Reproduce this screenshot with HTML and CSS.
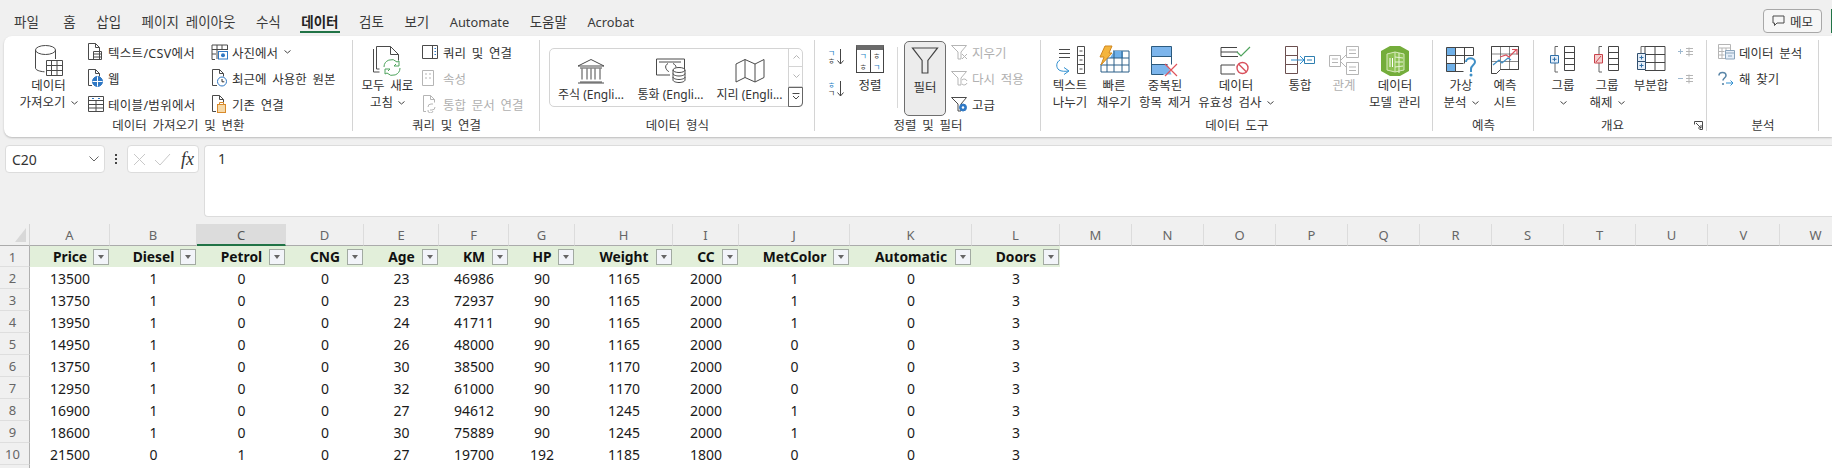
FILE: index.html
```html
<!DOCTYPE html>
<html lang="ko">
<head>
<meta charset="utf-8">
<title>데이터</title>
<link rel="stylesheet" href="styles.css">
</head>
<body>
<div class="app">
  <div class="tabs">
    <span class="tab first">파일</span><span class="tab">홈</span><span class="tab">삽입</span><span class="tab">페이지 레이아웃</span><span class="tab">수식</span><span class="tab active">데이터</span><span class="tab">검토</span><span class="tab">보기</span><span class="tab lat">Automate</span><span class="tab">도움말</span><span class="tab lat">Acrobat</span>
    <button class="memo"><svg width="13" height="12" viewBox="0 0 13 12" class="ln"><path d="M1 1h11v7H5L2.500 10.500V8H1z"/></svg>메모</button>
    <span class="share"></span>
  </div>

  <div class="ribbon">
    <section class="group g1">
      <div class="body">
        <div class="big w77">
          <svg class="ico ln" width="28" height="32" viewBox="0 0 28 32"><ellipse cx="10.500" cy="5" rx="10" ry="4.500"/><path d="M.5 5v18c0 2 4 3.500 9 3.800M20.500 5v9"/><path d="M11.500 15.500h16v15h-16zM11.500 20.500h16M11.500 25.500h16M16.500 15.500v15M22 15.500v15"/></svg>
          <span>데이터</span><span>가져오기<svg class="chev" width="7" height="4" viewBox="0 0 7 4"><path d="M.5.5l3 2.500 3-2.500"/></svg></span>
        </div>
        <div class="rows c124">
          <div class="small wide"><span class="sic"><svg class="ln" width="16" height="18" viewBox="0 0 16 18"><path d="M1.500.5h7l4 4v12h-11z"/><path d="M8.500.5v4h4M6.500 8.500h8v8h-8zM6.500 11h8M6.500 14h8"/></svg></span>텍스트/CSV에서</div>
          <div class="small"><span class="sic"><svg class="ln" width="16" height="18" viewBox="0 0 16 18"><path d="M5 16.500H1.500V.5h7l4 4v3"/><path d="M8.500.5v4h4"/><circle cx="10.500" cy="12.500" r="5" fill="#2f78c4" stroke="#2f78c4"/><path d="M5.500 12.500h10M10.500 7.500v10" stroke="#fff"/></svg></span>웹</div>
          <div class="small wide"><span class="sic"><svg class="ln" width="18" height="18" viewBox="0 0 18 18"><path d="M1.500 1.500h15v15h-15zM1.500 5.500h15M1.500 9.500h15M1.500 13h15M9 5.500v11"/><path d="M5 3.500h2M11 3.500h2" stroke="#2f78c4"/></svg></span>테이블/범위에서</div>
        </div>
        <div class="rows">
          <div class="small"><span class="sic"><svg class="ln" width="18" height="16" viewBox="0 0 18 16"><path d="M4 15.500H1V1h15.500v5M1 5.500h15.500M1 10h4M6 1v14M11 1v4.500"/><rect x="7.500" y="7.500" width="9" height="7.500" stroke="#2f78c4"/><circle cx="12" cy="11.200" r="2" fill="#2f78c4" stroke="none"/></svg></span>사진에서<svg class="chev" width="7" height="4" viewBox="0 0 7 4"><path d="M.5.5l3 2.500 3-2.500"/></svg></div>
          <div class="small"><span class="sic"><svg class="ln" width="17" height="18" viewBox="0 0 17 18"><path d="M6 16.500H1.500V.5h7l4 4v3"/><path d="M8.500.5v4h4"/><circle cx="11" cy="12.500" r="4.500" stroke="#2f78c4"/><path d="M11 10v2.800h2.300" stroke="#333"/></svg></span>최근에 사용한 원본</div>
          <div class="small"><span class="sic"><svg class="ln" width="17" height="18" viewBox="0 0 17 18"><path d="M5 16.500H1.500V.5h7l4 4v3"/><path d="M8.500.5v4h4"/><rect x="6.500" y="9.500" width="8" height="8" stroke="#d98a2b" fill="#f6d9a8"/><path d="M8.500 9.500V7.500h4v2" stroke="#d98a2b"/></svg></span>기존 연결</div>
        </div>
      </div>
      <div class="label">데이터 가져오기 및 변환</div>
    </section>

    <section class="group g2">
      <div class="body">
        <div class="big w70">
          <svg class="ico ln" width="30" height="32" viewBox="0 0 30 32"><path d="M.5 27V4M.5 27h6"/><path d="M3.500 24V1.500h14l8 8v6M3.500 24h3"/><path d="M17.500 1.500v8h8"/><path d="M11 22a7.500 7.500 0 0 1 13-5l2-1v5h-5l2-2M27 23a7.500 7.500 0 0 1-13 5l-2 1v-5h5l-2 2" stroke="#4ea35c"/></svg>
          <span>모두 새로</span><span>고침<svg class="chev" width="7" height="4" viewBox="0 0 7 4"><path d="M.5.5l3 2.500 3-2.500"/></svg></span>
        </div>
        <div class="rows">
          <div class="small"><span class="sic"><svg class="ln" width="16" height="14" viewBox="0 0 16 14"><path d="M.5.5h15v13H.5z"/><path d="M10.500.5v13"/><path d="M12.500 3.500h1.500M12.500 6.500h1.500M12.500 9.500h1.500" stroke="#2f78c4"/></svg></span>쿼리 및 연결</div>
          <div class="small off"><span class="sic"><svg class="lo" width="12" height="16" viewBox="0 0 12 16"><path d="M.5.5h11v15H.5zM3 4h2M7 4h2M3 8h2M7 8h2"/></svg></span>속성</div>
          <div class="small off"><span class="sic"><svg class="lo" width="16" height="18" viewBox="0 0 16 18"><path d="M4 16.500H1.500V.5h7l4 4v3M8.500.5v4h4"/><path d="M6 12a3 3 0 0 1 3-3h2M13 12a3 3 0 0 1-3 3H8M6 15a2.500 2.500 0 0 0 5 1"/></svg></span>통합 문서 연결</div>
        </div>
      </div>
      <div class="label">쿼리 및 연결</div>
    </section>

    <section class="group g3">
      <div class="body">
        <div class="gallery">
          <div class="gitem w78">
            <svg class="ln" width="28" height="26" viewBox="0 0 28 26"><path d="M1 8.500L14 2l13 6.500zM3 24.500h22M1 25.500h26M5 11v11M10 11v11M14 11v11M18 11v11M23 11v11M3 10.500h22"/></svg>
            <span>주식 (Engli...</span>
          </div>
          <div class="gitem w81">
            <svg class="ln" width="30" height="26" viewBox="0 0 30 26"><path d="M14 17.500H.5V1.500h28v10M3 4.500h22"/><path d="M12 6c-2 1-3 3-2 5s2 3 3 3M17 6c2 1 3 2 3 4"/><ellipse cx="23" cy="12.500" rx="6" ry="2.500"/><path d="M17 12.500v10c0 1.500 3 2.500 6 2.500s6-1 6-2.500v-10M17 16c0 1.500 3 2.500 6 2.500s6-1 6-2.500M17 19.500c0 1.500 3 2.500 6 2.500s6-1 6-2.500"/></svg>
            <span>통화 (Engli...</span>
          </div>
          <div class="gitem w77">
            <svg class="ln" width="30" height="26" viewBox="0 0 30 26"><path d="M1 6.500L10 2l10 4.500L29 2v18l-9 4.500L10 20l-9 4.500zM10 2v18M20 6.500v18"/></svg>
            <span>지리 (Engli...</span>
          </div>
          <div class="gscroll">
            <span class="gs"><svg class="lo" width="7" height="4" viewBox="0 0 7 4"><path d="M.5 3.500l3-3 3 3"/></svg></span>
            <span class="gs"><svg class="lo" width="7" height="4" viewBox="0 0 7 4"><path d="M.5.5l3 3 3-3"/></svg></span>
            <span class="gs more"><svg class="ln" width="8" height="7" viewBox="0 0 8 7"><path d="M.5.5h7M1 3l3 3 3-3"/></svg></span>
          </div>
        </div>
      </div>
      <div class="label">데이터 형식</div>
    </section>

    <section class="group g4">
      <div class="body">
        <div class="sortcol">
          <div class="sorti"><span class="jcol"><span class="jb">ㄱ</span><span class="jd">ㅎ</span></span><svg width="7" height="16" viewBox="0 0 7 16"><path d="M3.500 0v15M.5 11.500l3 3.500 3-3.500" fill="none" stroke="#444"/></svg></div>
          <div class="sorti"><span class="jcol"><span class="jb">ㅎ</span><span class="jd">ㄱ</span></span><svg width="7" height="16" viewBox="0 0 7 16"><path d="M3.500 0v15M.5 11.500l3 3.500 3-3.500" fill="none" stroke="#444"/></svg></div>
        </div>
        <div class="big w40">
          <div class="bsort">
            <span class="bcol"><span class="jb">ㄱ</span><span class="jd">ㅎ</span></span>
            <span class="bcol"><span class="jd">ㅎ</span><span class="jb">ㄱ</span></span>
          </div>
          <span>정렬</span>
        </div>
        <span class="vsep"></span>
        <div class="big filter">
          <svg class="ico" width="28" height="28" viewBox="0 0 28 28"><path d="M1 1h26L17 14v13h-6V14z" fill="none" stroke="#444" stroke-width="1.200"/></svg>
          <span>필터</span>
        </div>
        <div class="rows c-filter">
          <div class="small off"><span class="sic"><svg class="lo" width="17" height="15" viewBox="0 0 17 15"><path d="M.5.5h15L10 7v7H7V7z"/><path d="M11 9l5 5M16 9l-5 5"/></svg></span>지우기</div>
          <div class="small off"><span class="sic"><svg class="lo" width="17" height="15" viewBox="0 0 17 15"><path d="M.5.5h15L10 7v7H7V7z"/><path d="M11 9a3 3 0 0 1 5 1M16 12a3 3 0 0 1-5 1"/></svg></span>다시 적용</div>
          <div class="small"><span class="sic"><svg class="ln" width="17" height="15" viewBox="0 0 17 15"><path d="M.5.5h15L10 7v7H7V7z"/><circle cx="12" cy="10.500" r="3.500" fill="#2f78c4" stroke="#2f78c4"/><circle cx="12" cy="10.500" r="1.200" fill="#fff" stroke="none"/></svg></span>고급</div>
        </div>
      </div>
      <div class="label">정렬 및 필터</div>
    </section>

    <section class="group g5">
      <div class="body">
        <div class="big w44">
          <svg class="ico ln" width="32" height="32" viewBox="0 0 32 32"><path d="M5 4.500h11M5 8.500h11M5 12.500h11"/><path d="M23.500 1.500h7v27h-7zM23.500 10.500h7M23.500 19.500h7M25.500 6h3M25.500 15h3M25.500 24h3"/><path d="M6 15a6 6 0 0 0-1 10c2 1.500 7 1.500 9 1M10 22.500l5 3.500-5 3.500" stroke="#2f8fd0"/></svg>
          <span>텍스트</span><span>나누기</span>
        </div>
        <div class="big w44">
          <svg class="ico" width="32" height="32" viewBox="0 0 32 32"><path d="M15 6h16v21H3v-8" fill="none" stroke="#2b5f88"/><path d="M16 6h9v7H12z" fill="#6fb0e8"/><path d="M9 13h22M3 20h28M16 6v21M24 6v21M9 13v14" fill="none" stroke="#2b5f88"/><path d="M7 1h7l-3 7h3L3 20l3-8H2z" fill="#f4b53d" stroke="#d1871e"/></svg>
          <span>빠른</span><span>채우기</span>
        </div>
        <div class="big w58">
          <svg class="ico" width="28" height="32" viewBox="0 0 28 32"><path d="M.5 1.500h20v10H.5z" fill="#7cb5ec"/><path d="M.5 11.500h20v8H.5z" fill="#fff"/><path d="M.5 19.500h16l4 10H.5z" fill="#7cb5ec"/><path d="M.5 1.500h20M.5 1.500v28M20.500 1.500v18M.5 11.500h20M.5 19.500h16M.5 29.500h12" fill="none" stroke="#2c5b7f"/><path d="M14 19l12 12M26 19L14 31" fill="none" stroke="#e0545c" stroke-width="1.200"/></svg>
          <span>중복된</span><span>항목 제거</span>
        </div>
        <div class="big w84">
          <svg class="ico" width="32" height="32" viewBox="0 0 32 32"><path d="M17 2.500H1v9h17M1 7h17M1 20v9h14" fill="none" stroke="#444"/><path d="M17 7l4 4 9-9" fill="none" stroke="#4ea35c" stroke-width="1.200"/><path d="M1 20h14" fill="none" stroke="#444"/><circle cx="22.500" cy="23" r="5.500" fill="none" stroke="#d8505c" stroke-width="1.400"/><path d="M18.500 19l8 8" stroke="#d8505c" stroke-width="1.400"/></svg>
          <span>데이터</span><span>유효성 검사<svg class="chev" width="7" height="4" viewBox="0 0 7 4"><path d="M.5.5l3 2.500 3-2.500"/></svg></span>
        </div>
        <div class="big w44">
          <svg class="ico ln" width="30" height="32" viewBox="0 0 30 32"><path d="M.5 1.500h12v9h-12zM.5 10.500h12v9h-12zM.5 19.500h12v9h-12z" stroke="#6b4f4f"/><path d="M6 15h13M15 11l4 4-4 4" stroke="#2f8fd0"/><path d="M19.500 11.500h10v7h-10zM22 15h5" stroke="#2f7fb0"/></svg>
          <span>통합</span>
        </div>
        <div class="big w44 off">
          <svg class="ico lo" width="30" height="32" viewBox="0 0 30 32"><path d="M17.500 1.500h12v11h-12zM17.500 17.500h12v12h-12zM.5 10.500h11v11H.5zM20 5h7M20 8.500h7M20 22h7M20 25.500h7M3 14h6M3 17.500h6M12 15l5-5M12 17l5 5"/></svg>
          <span>관계</span>
        </div>
        <div class="big w58">
          <svg class="ico" width="30" height="32" viewBox="0 0 30 32"><path d="M1 6l9-5h10l9 5v20l-9 5H10l-9-5z" fill="#74ad3b"/><path d="M7 9l8-2v20l-8-2zM15 7l9 2v16l-9 2" fill="#8cc152" stroke="#d8eabc"/><path d="M15 12l8 1M15 17h8M15 22l8-1M19 8v20" stroke="#e6f2d4"/><path d="M10 13v9M12.500 13v9" stroke="#fff"/></svg>
          <span>데이터</span><span>모델 관리</span>
        </div>
      </div>
      <div class="label">데이터 도구</div>
    </section>

    <section class="group g6">
      <div class="body">
        <div class="big w50">
          <svg class="ico" width="31" height="32" viewBox="0 0 31 32"><path d="M.5 2.500h9v8h-9zM.5 18.500h9v8h-9z" fill="#6fb0e8"/><path d="M.5 2.500h27v8M.5 2.500v24h17M.5 10.500h27M.5 18.500h17M9.500 2.500v24M18.500 2.500v16" fill="none" stroke="#444"/><path d="M20 17c0-5 9-5 9 0 0 3-4 3-4 7v3" fill="none" stroke="#3f8fc6" stroke-width="2"/><circle cx="25" cy="30" r="1.500" fill="#3f8fc6"/></svg>
          <span>가상</span><span>분석<svg class="chev" width="7" height="4" viewBox="0 0 7 4"><path d="M.5.5l3 2.500 3-2.500"/></svg></span>
        </div>
        <div class="big w38">
          <svg class="ico" width="29" height="32" viewBox="0 0 29 32"><path d="M.5 1.500h27v23h-18l-4 4h-5zM.5 9h27M.5 16.500h27M9.500 1.500v23M18.500 1.500v23" fill="none" stroke="#555" stroke-width=".7"/><path d="M.5 1.500h27M27.500 1.500v23H9.500l-4 4h-5V1.500" fill="none" stroke="#444"/><path d="M2 20l6-5 3 3 6-5 3 2" fill="none" stroke="#3f8fc6" stroke-width="1.200"/><path d="M9 12l6-2 3 2 7-7M21 4.500h5v5" fill="none" stroke="#d8505c" stroke-width="1.200"/></svg>
          <span>예측</span><span>시트</span>
        </div>
      </div>
      <div class="label">예측</div>
    </section>

    <section class="group g7">
      <div class="body">
        <div class="big w44">
          <svg class="ico" width="26" height="32" viewBox="0 0 26 32"><path d="M8 1.500H5v9M5 18v9h3" fill="none" stroke="#666"/><path d="M.5 10.500h8v7.500h-8z" fill="#e5eef8" stroke="#2f6fa8"/><path d="M2.500 14.300h4M4.500 12.300v4" stroke="#2f6fa8"/><path d="M14.500 1.500h10v24h-10zM14.500 7.500h10M14.500 13.500h10M14.500 19.500h10" fill="none" stroke="#444"/></svg>
          <span>그룹</span><span><svg class="chev only" width="7" height="4" viewBox="0 0 7 4"><path d="M.5.5l3 2.500 3-2.500"/></svg></span>
        </div>
        <div class="big w44">
          <svg class="ico" width="26" height="32" viewBox="0 0 26 32"><path d="M8 1.500H5v8M5 18v9h3" fill="none" stroke="#666"/><path d="M.5 9.500h8v8.500h-8z" fill="#f6cfcf" stroke="#c8424a"/><path d="M2 17l5-6" stroke="#c8424a"/><path d="M14.500 1.500h10v24h-10zM14.500 7.500h10M14.500 13.500h10M14.500 19.500h10" fill="none" stroke="#444"/></svg>
          <span>그룹</span><span>해제<svg class="chev" width="7" height="4" viewBox="0 0 7 4"><path d="M.5.5l3 2.500 3-2.500"/></svg></span>
        </div>
        <div class="big w44">
          <svg class="ico" width="30" height="32" viewBox="0 0 30 32"><path d="M9 1.500h20v24H9M9 1.500v7M19 1.500v24M9 9.500h20M9 17.500h20" fill="none" stroke="#444"/><path d="M1.500 8.500h8v8h-8zM1.500 16.500h8v8h-8z" fill="#e5eef8" stroke="#2f4f6f"/><path d="M3.500 12.500h4M5.500 10.500v4M3.500 20.500h4M5.500 18.500v4" stroke="#2f6fa8"/><path d="M5 1.500h4M5 1.500v7" fill="none" stroke="#666"/></svg>
          <span>부분합</span>
        </div>
        <div class="rows c-out">
          <div class="small"><span class="sic"><svg class="lo" width="16" height="10" viewBox="0 0 16 10"><path d="M0 4.500h5M2.500 2v5" stroke="#9db8cf"/><path d="M8 1.500h7M8 4.500h7M8 7.500h7M11 .5v9"/></svg></span></div>
          <div class="small"><span class="sic"><svg class="lo" width="16" height="10" viewBox="0 0 16 10"><path d="M0 4.500h5" stroke="#9db8cf"/><path d="M8 1.500h7M8 4.500h7M8 7.500h7M11 .5v9"/></svg></span></div>
        </div>
      </div>
      <div class="label">개요</div>
      <svg class="launch ln" width="9" height="9" viewBox="0 0 9 9"><path d="M.5 3.500v-3h8v8h-3M2 2l5 5M4 7h3V4"/></svg>
    </section>

    <section class="group g8">
      <div class="body">
        <div class="rows">
          <div class="small"><span class="sic"><svg class="lo" width="17" height="16" viewBox="0 0 17 16"><path d="M.5.5h12v14H.5zM.5 4h12M.5 7.500h6M.5 11h6M4 4v10.500M8 4v3"/><path d="M7.500 6.500h9v8.500h-9z" fill="#e5eef8" stroke="#8aa4bb"/><path d="M7.500 9h9M10 12h4" stroke="#8aa4bb"/></svg></span>데이터 분석</div>
          <div class="small"><span class="sic"><svg width="16" height="16" viewBox="0 0 16 16"><path d="M1 4.500c0-4 7-4 7 0 0 2.500-3 2.500-3 5" fill="none" stroke="#5a86a8" stroke-width="1.600"/><circle cx="5" cy="13" r="1.100" fill="#5a86a8"/><path d="M8 12h7M12.500 9.500L15 12l-2.500 2.500" fill="none" stroke="#2f8fd0"/></svg></span>해 찾기</div>
        </div>
      </div>
      <div class="label">분석</div>
    </section>
  </div>

  <div class="fbar">
    <div class="namebox"><span>C20</span><svg class="chev big-chev" width="10" height="6" viewBox="0 0 10 6"><path d="M.5.5l4.500 4.500 4.500-4.500"/></svg></div>
    <div class="dots"><i></i><i></i><i></i></div>
    <div class="fxbox">
      <svg width="13" height="13" viewBox="0 0 13 13"><path d="M1 1l11 11M12 1L1 12" stroke="#c8c8c8" fill="none"/></svg>
      <svg width="17" height="13" viewBox="0 0 17 13"><path d="M1 7l5 5L16 1" stroke="#c8c8c8" fill="none"/></svg>
      <span class="fx">fx</span>
    </div>
    <div class="finput">1</div>
  </div>

  <div class="sheet">
    <div class="corner"><span class="tri"></span></div>
    <div class="ch">A</div><div class="ch">B</div><div class="ch sel">C</div><div class="ch">D</div><div class="ch">E</div><div class="ch">F</div><div class="ch">G</div><div class="ch">H</div><div class="ch">I</div><div class="ch">J</div><div class="ch">K</div><div class="ch">L</div><div class="ch">M</div><div class="ch">N</div><div class="ch">O</div><div class="ch">P</div><div class="ch">Q</div><div class="ch">R</div><div class="ch">S</div><div class="ch">T</div><div class="ch">U</div><div class="ch">V</div><div class="ch">W</div>

    <div class="rh">1</div>
    <div class="th">Price<b></b></div><div class="th">Diesel<b></b></div><div class="th">Petrol<b></b></div><div class="th">CNG<b></b></div><div class="th">Age<b></b></div><div class="th">KM<b></b></div><div class="th">HP<b></b></div><div class="th">Weight<b></b></div><div class="th">CC<b></b></div><div class="th">MetColor<b></b></div><div class="th">Automatic<b></b></div><div class="th">Doors<b></b></div>
    <div class="rest"></div>

    <div class="rh">2</div><div>13500</div><div>1</div><div>0</div><div>0</div><div>23</div><div>46986</div><div>90</div><div>1165</div><div>2000</div><div>1</div><div>0</div><div>3</div><div class="rest"></div>
    <div class="rh">3</div><div>13750</div><div>1</div><div>0</div><div>0</div><div>23</div><div>72937</div><div>90</div><div>1165</div><div>2000</div><div>1</div><div>0</div><div>3</div><div class="rest"></div>
    <div class="rh">4</div><div>13950</div><div>1</div><div>0</div><div>0</div><div>24</div><div>41711</div><div>90</div><div>1165</div><div>2000</div><div>1</div><div>0</div><div>3</div><div class="rest"></div>
    <div class="rh">5</div><div>14950</div><div>1</div><div>0</div><div>0</div><div>26</div><div>48000</div><div>90</div><div>1165</div><div>2000</div><div>0</div><div>0</div><div>3</div><div class="rest"></div>
    <div class="rh">6</div><div>13750</div><div>1</div><div>0</div><div>0</div><div>30</div><div>38500</div><div>90</div><div>1170</div><div>2000</div><div>0</div><div>0</div><div>3</div><div class="rest"></div>
    <div class="rh">7</div><div>12950</div><div>1</div><div>0</div><div>0</div><div>32</div><div>61000</div><div>90</div><div>1170</div><div>2000</div><div>0</div><div>0</div><div>3</div><div class="rest"></div>
    <div class="rh">8</div><div>16900</div><div>1</div><div>0</div><div>0</div><div>27</div><div>94612</div><div>90</div><div>1245</div><div>2000</div><div>1</div><div>0</div><div>3</div><div class="rest"></div>
    <div class="rh">9</div><div>18600</div><div>1</div><div>0</div><div>0</div><div>30</div><div>75889</div><div>90</div><div>1245</div><div>2000</div><div>1</div><div>0</div><div>3</div><div class="rest"></div>
    <div class="rh">10</div><div>21500</div><div>0</div><div>1</div><div>0</div><div>27</div><div>19700</div><div>192</div><div>1185</div><div>1800</div><div>0</div><div>0</div><div>3</div><div class="rest"></div>
    <div class="rh"></div>
  </div>
</div>
</body>
</html>
```

FILE: styles.css
```css
* { box-sizing: border-box; }
html, body { margin: 0; padding: 0; }
body {
  width: 1832px;
  height: 468px;
  overflow: hidden;
  background: #f0f0f0;
  color: #333;
  font-family: "Noto Sans", "Noto Sans CJK KR", sans-serif;
  font-size: 12.5px;
  word-spacing: .2em;
}
svg { display: block; flex: none; }
.ln { fill: none; stroke: #4a4a4a; }
.lo { fill: none; stroke: #b5b5b5; }
.app { width: 1832px; height: 468px; overflow: hidden; }

/* tabs */
.tabs { display: flex; height: 36px; padding-left: 14px; gap: 20.500px; }
.tab { font-size: 13.500px; line-height: 24px; height: 33px; padding-top: 10px; color: #3a3a3a; white-space: nowrap; word-spacing: .25em; }
.tab.first { margin-right: 4px; }
.tab.lat { font-size: 12.800px; word-spacing: 0; }
.tab.active { font-weight: 700; color: #222; border-bottom: 2px solid #217346; margin: 0 -1px; padding-left: 1px; padding-right: 1px; }
.memo {
  margin: 9px 0 0 auto;
  width: 59px; height: 24px;
  display: flex; align-items: center; justify-content: center; gap: 5px;
  background: #f6f6f6; border: 1px solid #a8a8a8; border-radius: 4px;
  font: 12.500px "Noto Sans", "Noto Sans CJK KR", sans-serif; color: #333; padding: 0;
}
.share { width: 1px; height: 24px; margin: 9px 0 0 -11.500px; background: #217346; }

/* ribbon */
.ribbon {
  display: flex; height: 101px; margin-left: 4px;
  background: #fff; border-radius: 8px 0 0 8px;
  box-shadow: 0 1px 2px rgba(0,0,0,.22);
}
.group { position: relative; height: 101px; flex: none; display: flex; flex-direction: column; }
.group::after { content: ""; position: absolute; right: 0; top: 4px; bottom: 6px; width: 1px; background: #d4d4d4; }
.body { display: flex; height: 81px; }
.label { height: 20px; line-height: 18px; text-align: center; color: #3a3a3a; white-space: nowrap; }
.g1 { width: 349px; } .g1 .body { padding-left: 6px; }
.g2 { width: 187px; }
.g3 { width: 275px; } .g3 .body { padding-left: 9px; }
.g4 { width: 226px; } .g4 .body { padding-left: 10px; }
.g5 { width: 392px; } .g5 .body { padding-left: 7px; }
.g6 { width: 101px; } .g6 .body { padding-left: 3px; }
.g7 { width: 173px; } .g7 .body { padding-left: 7px; } .g7 .label { padding-right: 16px; }
.g8 { width: 112px; } .g8 .body { padding-left: 11px; }

.big { display: flex; flex-direction: column; align-items: center; flex: none; padding-top: 9px; line-height: 17px; white-space: nowrap; }
.big > span { display: flex; align-items: center; height: 17px; }
.big .ico { height: 32px; }
.w38 { width: 38px; } .w40 { width: 40px; } .w44 { width: 44px; } .w50 { width: 50px; } .w58 { width: 58px; }
.w70 { width: 69px; } .w77 { width: 77px; } .w78 { width: 78px; } .w81 { width: 81px; } .w84 { width: 84px; }
.off { color: #b0b0b0; }

.chev { fill: none; stroke: #444; margin-left: 5px; }
.chev.only, .big-chev { margin-left: 0; }
.rows { display: flex; flex-direction: column; padding-top: 3px; flex: none; }
.c124 { width: 124px; }
.small { display: flex; align-items: center; height: 26.500px; gap: 1px; white-space: nowrap; }
.small.wide { letter-spacing: .3px; }
.sic { width: 20px; display: flex; align-items: center; }
.c-filter { margin-left: 5px; }
.c-out { margin-left: 5px; }
.launch { position: absolute; left: 160px; bottom: 7px; }

/* gallery */
.gallery { width: 254px; height: 59px; margin-top: 12px; padding-left: 2px; display: flex; border: 1px solid #d4d4d4; border-radius: 5px; }
.gitem { flex: none; display: flex; flex-direction: column; align-items: center; padding-top: 8px; font-size: 12px; white-space: nowrap; word-spacing: 0; height: 57px; }
.gitem svg { height: 27px; }
.gitem span { line-height: 20px; margin-top: 1px; }
.gscroll { margin-left: auto; width: 15px; display: flex; flex-direction: column; margin-right: -1px; margin-top: -1px; height: 59px; }
.gs { flex: 1; display: flex; align-items: center; justify-content: center; border-left: 1px solid #d4d4d4; border-bottom: 1px solid #d4d4d4; }
.gs.more { border: 1px solid #666; border-radius: 0 0 4px 0; }

/* sort & filter */
.sortcol { width: 25px; display: flex; flex-direction: column; gap: 15px; padding: 12px 0 0 2px; flex: none; }
.sorti { display: flex; align-items: center; gap: 1px; height: 17px; }
.jcol, .bcol { display: flex; flex-direction: column; align-items: center; font-family: "Noto Sans CJK KR", sans-serif; }
.jcol { font-size: 8px; line-height: 8px; width: 9px; }
.jcol > span { height: 8px; }
.bcol { flex: 1; font-size: 8px; line-height: 11px; }
.bcol:first-child { border-right: 1px solid #444; }
.bcol > span { height: 11px; }
.jb { color: #1f7fc4; }
.jd { color: #444; }
.bsort { width: 28px; height: 28px; margin: 0 0 4px; display: flex; border: 1px solid #444; border-top: 5px solid #6a6a6a; }
.vsep { width: 1px; height: 61px; margin: 11px 6px 0 7px; background: #d8d8d8; flex: none; }
.filter { width: 42px; height: 75px; margin-top: 5px; padding-top: 5px; background: #ececec; border: 1px solid #6e6e6e; border-radius: 5px; }
.filter .ico { height: 27px; margin-bottom: 5px; }

/* formula bar */
.fbar { display: flex; height: 72px; margin-top: 8px; padding-left: 5px; align-items: flex-start; }
.namebox { width: 100px; height: 28px; background: #fff; border: 1px solid #dcdcdc; border-radius: 4px; display: flex; align-items: center; justify-content: space-between; padding: 0 5px 0 6px; font-size: 14px; color: #333; }
.big-chev { stroke: #666; }
.dots { width: 22px; height: 28px; display: flex; flex-direction: column; justify-content: center; align-items: center; gap: 2px; }
.dots i { display: block; width: 2px; height: 2px; background: #444; }
.fxbox { width: 72px; height: 28px; background: #fff; border: 1px solid #dcdcdc; border-radius: 4px; display: flex; align-items: center; padding-left: 5px; gap: 8px; }
.fx { font-family: "Liberation Serif", serif; font-style: italic; font-size: 18px; color: #333; margin-left: 2px; }
.finput { flex: 1; height: 72px; margin-left: 5px; background: #fff; border: 1px solid #dcdcdc; border-right: 0; border-radius: 4px 0 0 4px; padding: 3px 0 0 13px; font-size: 14px; line-height: 20px; color: #333; }

/* sheet */
.sheet {
  display: grid;
  grid-template-columns: 30px 80px 87px 89px 78px 75px 70px 66px 98px 66px 111px 122px 88px repeat(11, 72px);
  grid-template-rows: 22px 21px;
  grid-auto-rows: 22px;
  margin-top: 7px;
  background: #fff;
  font-size: 14px;
  color: #1a1a1a;
  text-align: center;
  word-spacing: 0;
}
.sheet > div { line-height: 23px; height: 100%; }
.corner { background: #f0f0f0; border-right: 1px solid #d4d4d4; border-bottom: 1px solid #ababab; display: flex; justify-content: flex-end; align-items: flex-end; padding: 0 3px 3px 0; }
.tri { width: 0; height: 0; border-left: 11px solid transparent; border-bottom: 14px solid #d8d8d8; }
.sheet > .ch { background: #f0f0f0; border-right: 1px solid #dcdcdc; border-bottom: 1px solid #ababab; color: #666; font-size: 13px; line-height: 22px; }
.sheet > .ch.sel { background: #dcdcdc; border-bottom: 2px solid #217346; color: #555; }
.sheet > .rh { background: #f0f0f0; border-right: 1px solid #b0b0b0; border-bottom: 1px solid #dedede; color: #666; font-size: 13px; padding-right: 4px; grid-column: 1; }
.sheet > .rest { grid-column: 14 / -1; }
.sheet > .th { position: relative; background: #e2efda; font-weight: 700; color: #111; line-height: 21px; font-size: 13.800px; }
.th b { position: absolute; right: 1px; top: 3px; width: 16px; height: 16px; background: #f2f4f9; border: 1px solid #a2aaa2; display: flex; align-items: center; justify-content: center; }
.th b::after { content: ""; border-left: 3.500px solid transparent; border-right: 3.500px solid transparent; border-top: 4px solid #666; }
```
